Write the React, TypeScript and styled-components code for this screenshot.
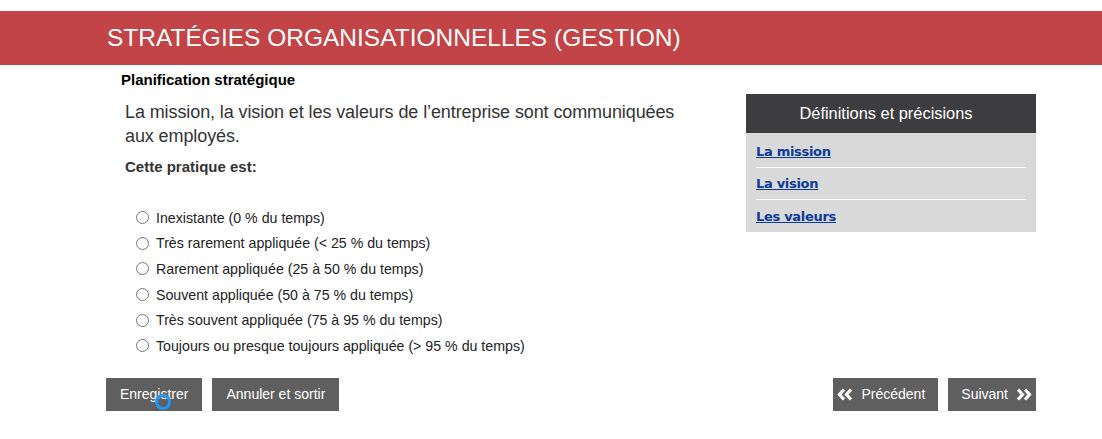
import React from 'react';
import styled, { createGlobalStyle } from 'styled-components';

const GlobalStyle = createGlobalStyle`
  html, body {
    margin: 0;
    padding: 0;
    background: #fff;
    font-family: "Liberation Sans", Arial, sans-serif;
  }
`;

const options = [
  'Inexistante (0 % du temps)',
  'Très rarement appliquée (< 25 % du temps)',
  'Rarement appliquée (25 à 50 % du temps)',
  'Souvent appliquée (50 à 75 % du temps)',
  'Très souvent appliquée (75 à 95 % du temps)',
  'Toujours ou presque toujours appliquée (> 95 % du temps)',
];

const links = ['La mission', 'La vision', 'Les valeurs'];

function Chevrons({ dir }: { dir: 'left' | 'right' }): JSX.Element {
  const d =
    dir === 'left'
      ? 'M7 1.5 L2.5 6.5 L7 11.5 M14 1.5 L9.5 6.5 L14 11.5'
      : 'M2 1.5 L6.5 6.5 L2 11.5 M9 1.5 L13.5 6.5 L9 11.5';
  return (
    <svg width="16" height="13" viewBox="0 0 16 13">
      <path d={d} fill="none" stroke="#fff" strokeWidth="3.2" />
    </svg>
  );
}

export default function App(): JSX.Element {
  return (
    <Page>
      <GlobalStyle />
      <Banner>
        <Title>STRATÉGIES ORGANISATIONNELLES (GESTION)</Title>
      </Banner>
      <Container>
        <Section>Planification stratégique</Section>
        <Body>
          <Main>
            <Question>
              La mission, la vision et les valeurs de l’entreprise sont communiquées
              aux employés.
            </Question>
            <Label>Cette pratique est:</Label>
            <Options>
              {options.map((o) => (
                <Option key={o}>
                  <Radio />
                  {o}
                </Option>
              ))}
            </Options>
          </Main>
          <Aside>
            <AsideHead>Définitions et précisions</AsideHead>
            <AsideBody>
              {links.map((l, i) => (
                <LinkRow key={l} last={i === links.length - 1}>
                  <DefLink href="#">{l}</DefLink>
                </LinkRow>
              ))}
            </AsideBody>
          </Aside>
        </Body>
        <Actions>
          <Group>
            <Button>
              Enregistrer
              <Spinner />
            </Button>
            <Button>Annuler et sortir</Button>
          </Group>
          <Group>
            <Button icon="left">
              <Chevrons dir="left" />
              Précédent
            </Button>
            <Button icon="right">
              Suivant
              <Chevrons dir="right" />
            </Button>
          </Group>
        </Actions>
      </Container>
    </Page>
  );
}

const Page = styled.div`
  width: 1102px;
  padding-top: 11px;
`;

const Banner = styled.div`
  background: #c24446;
  height: 54px;
  display: flex;
  align-items: center;
  padding-left: 107px;
`;

const Title = styled.h1`
  margin: 0;
  font-weight: normal;
  font-size: 24.5px;
  color: #fff;
`;

const Container = styled.div`
  width: 930px;
  margin-left: 106px;
`;

const Section = styled.div`
  font-size: 15px;
  font-weight: bold;
  color: #000;
  margin: 7px 0 0 15px;
  line-height: 16px;
`;

const Body = styled.div`
  display: flex;
  justify-content: space-between;
`;

const Main = styled.div`
  padding-left: 19px;
`;

const Question = styled.p`
  margin: 12px 0 0;
  width: 580px;
  font-size: 18px;
  line-height: 24px;
  letter-spacing: -0.1px;
  color: #333;
`;

const Label = styled.div`
  margin-top: 10px;
  font-size: 15px;
  font-weight: bold;
  color: #333;
`;

const Options = styled.div`
  margin-top: 30px;
  padding-left: 11px;
  display: flex;
  flex-direction: column;
`;

const Option = styled.label`
  display: flex;
  align-items: center;
  height: 25.6px;
  font-size: 14.2px;
  color: #222;
`;

const Radio = styled.span`
  box-sizing: border-box;
  width: 13px;
  height: 13px;
  border: 1px solid #767676;
  border-radius: 50%;
  margin-right: 7px;
`;

const Aside = styled.div`
  width: 290px;
  margin-top: 6px;
  align-self: flex-start;
`;

const AsideHead = styled.div`
  background: #3d3d3f;
  color: #fff;
  height: 39px;
  padding-right: 10px;
  display: flex;
  align-items: center;
  justify-content: center;
  font-size: 16.4px;
`;

const AsideBody = styled.div`
  background: #d9d9d9;
  padding: 3px 10px 0;
`;

const LinkRow = styled.div<{ last?: boolean }>`
  box-sizing: border-box;
  height: 32px;
  display: flex;
  align-items: center;
  border-bottom: ${(p) => (p.last ? 'none' : '1px solid #fff')};
`;

const DefLink = styled.a`
  font-family: "DejaVu Sans", Verdana, sans-serif;
  font-weight: bold;
  font-size: 13px;
  color: #0b3a9a;
  text-decoration: underline;
  letter-spacing: -0.3px;
`;

const Actions = styled.div`
  display: flex;
  justify-content: space-between;
  margin-top: 19px;
`;

const Group = styled.div`
  display: flex;
  gap: 10px;
`;

const Button = styled.button<{ icon?: 'left' | 'right' }>`
  position: relative;
  height: 33px;
  padding: ${(p) =>
    p.icon === 'left' ? '0 13px 0 4px' : p.icon === 'right' ? '0 4px 0 13px' : '0 14px'};
  border: none;
  background: #5f5f5f;
  color: #fff;
  font-family: "Liberation Sans", Arial, sans-serif;
  font-size: 14px;
  display: flex;
  align-items: center;
  gap: 8px;
  cursor: pointer;
`;

const Spinner = styled.span`
  position: absolute;
  left: 49px;
  top: 16px;
  width: 10px;
  height: 10px;
  border: 3px solid #2196f3;
  border-radius: 50%;
`;
